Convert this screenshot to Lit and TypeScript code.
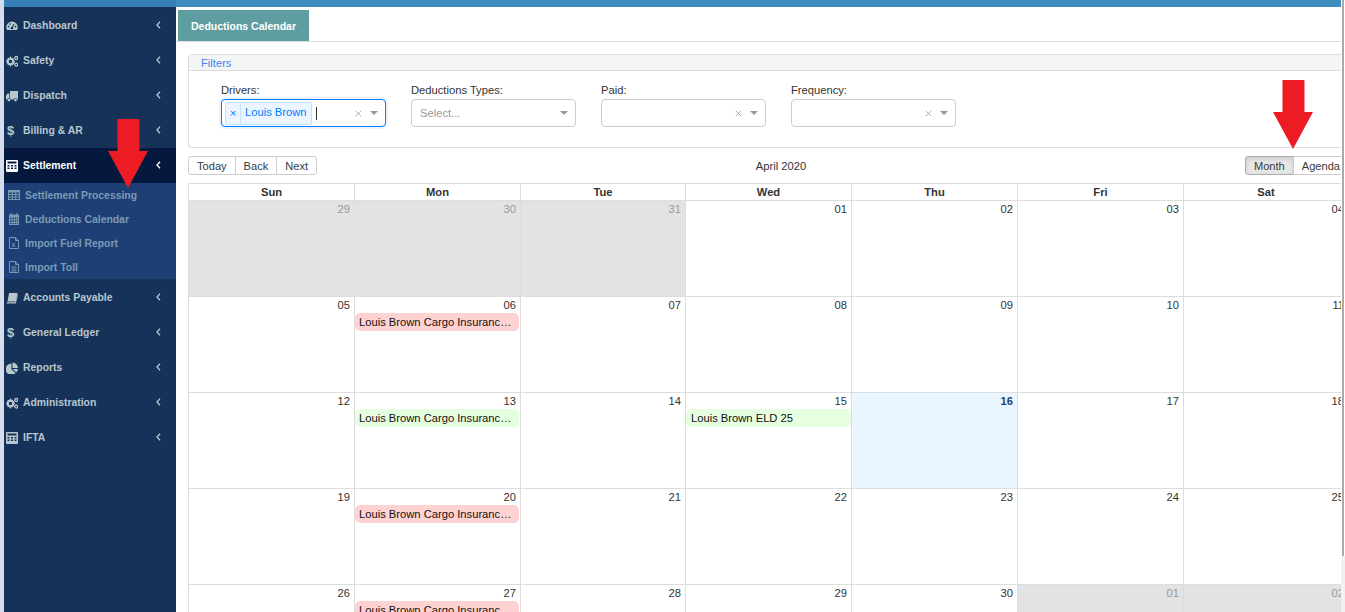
import { LitElement, html, css, svg } from "lit";
import { customElement } from "lit/decorators.js";

const FONT = css`"Liberation Sans", Arial, sans-serif`;

const icons: Record<string, unknown> = {
  dash: svg`<path d="M6 1.500A5.700 5.700 0 0 0 .3 7.200c0 1.100.3 2 .8 2.800h9.800c.5-.8.8-1.700.8-2.800A5.700 5.700 0 0 0 6 1.500z"/><circle cx="6" cy="8" r="1.300" fill="#163259"/><path d="M6 8l2-4" stroke="#163259" stroke-width="1"/><circle cx="2.600" cy="6.600" r=".8" fill="#163259"/><circle cx="4" cy="4" r=".8" fill="#163259"/><circle cx="9.500" cy="6.600" r=".8" fill="#163259"/>`,
  cogs: svg`<circle cx="4.500" cy="6.500" r="2.800" fill="none" stroke="currentColor" stroke-width="2.200"/><path d="M4 1.500h1v2H4zM4 9.500h1v2H4zM0 6h2v1H0zM7 6h2v1H7z"/><circle cx="10.200" cy="3" r="1.500" fill="none" stroke="currentColor" stroke-width="1.300"/><circle cx="10.200" cy="9.600" r="1.500" fill="none" stroke="currentColor" stroke-width="1.300"/>`,
  truck: svg`<path d="M4 1h8v8.500H4zM3.400 3.500H1.500L0 5.500v4h3.400z"/><circle cx="3" cy="10" r="1.700" stroke="#163259" stroke-width=".6"/><circle cx="9.500" cy="10" r="1.700" stroke="#163259" stroke-width=".6"/>`,
  calc: svg`<path fill-rule="evenodd" d="M1 0h10a1 1 0 0 1 1 1v10a1 1 0 0 1-1 1H1a1 1 0 0 1-1-1V1a1 1 0 0 1 1-1zM1.500 1.500v2h9v-2zM1.500 5v1.500h2V5zm3.500 0v1.500h2V5zm3.500 0v1.500h2V5zM1.500 7.500V9h2V7.500zm3.500 0V9h2V7.500zm3.500 0V9h2V7.500z"/>`,
  book: svg`<path d="M3 1h8.500L9.500 9.500H1.500zM1 10.200h8.300l2.200-8 .5.700-2.200 8.600H1.500C.4 11.500.4 10.200 1 10.200z"/>`,
  pie: svg`<path d="M5.400 1.500v5.800l4.200 3.700A5.700 5.700 0 1 1 5.400 1.500z"/><path d="M6.500 0.500A5.700 5.700 0 0 1 12 6H6.500zM6.800 7H12a5.700 5.700 0 0 1-1.700 3.400z"/>`,
  table: svg`<path fill-rule="evenodd" d="M0 1h12v10H0zM1 3.500V5h2.800V3.500zm3.800 0V5h2.400V3.500zm3.400 0V5H11V3.500zM1 6v1.500h2.800V6zm3.800 0v1.500h2.400V6zm3.400 0v1.500H11V6zM1 8.500V10h2.800V8.500zm3.800 0V10h2.400V8.500zm3.400 0V10H11V8.500z"/>`,
  cal: svg`<path fill-rule="evenodd" d="M2.500 0h1.200v1.500h4.600V0h1.200v1.500H11v10.500H1V1.500h1.500zM2 4.500v1.700h1.600V4.500zm2.600 0v1.700h1.300V4.500zm2.300 0v1.700h1.300V4.500zm2.300 0v1.700H10V4.500zM2 7.200v1.700h1.600V7.200zm2.600 0v1.700h1.300V7.200zm2.300 0v1.700h1.300V7.200zm2.300 0v1.700H10V7.200zM2 9.900v1.200h1.600V9.900zm2.600 0v1.200h1.300V9.900zm2.300 0v1.200h1.300V9.900zm2.300 0v1.200H10V9.900z"/>`,
  xls: svg`<path fill="none" stroke="currentColor" d="M1.500.5h6l3 3v8h-9z"/><path fill="none" stroke="currentColor" d="M7.500.5v3h3"/><path fill="none" stroke="currentColor" d="M4 6l3 4M7 6l-3 4"/>`,
  txt: svg`<path fill="none" stroke="currentColor" d="M1.500.5h6l3 3v8h-9z"/><path fill="none" stroke="currentColor" d="M7.500.5v3h3M3.500 6h5M3.500 8h5M3.500 10h5"/>`,
};

function icon(name: string) {
  if (name === "dollar") return html`<span class="dollar">$</span>`;
  return html`<svg class="ico" viewBox="0 0 12 12" fill="currentColor">${icons[name]}</svg>`;
}

const chevron = html`<svg class="chev" viewBox="0 0 5 8"><path d="M4 .8 1 4l3 3.200" fill="none" stroke="currentColor" stroke-width="1.300"/></svg>`;
const clear = html`<svg class="x" viewBox="0 0 9 9"><path d="M1 1l7 7M8 1 1 8" fill="none" stroke="currentColor" stroke-width="1"/></svg>`;

type Ev = { text: string; cls: string };
type Cell = { n: string; off?: boolean; today?: boolean; ev?: Ev };

const cargo = "Louis Brown Cargo Insurance 50";
const weeks: Cell[][] = [
  [{ n: "29", off: true }, { n: "30", off: true }, { n: "31", off: true }, { n: "01" }, { n: "02" }, { n: "03" }, { n: "04" }],
  [{ n: "05" }, { n: "06", ev: { text: cargo, cls: "red" } }, { n: "07" }, { n: "08" }, { n: "09" }, { n: "10" }, { n: "11" }],
  [{ n: "12" }, { n: "13", ev: { text: cargo, cls: "green" } }, { n: "14" }, { n: "15", ev: { text: "Louis Brown ELD 25", cls: "green wide" } }, { n: "16", today: true }, { n: "17" }, { n: "18" }],
  [{ n: "19" }, { n: "20", ev: { text: cargo, cls: "red" } }, { n: "21" }, { n: "22" }, { n: "23" }, { n: "24" }, { n: "25" }],
  [{ n: "26" }, { n: "27", ev: { text: cargo, cls: "red" } }, { n: "28" }, { n: "29" }, { n: "30" }, { n: "01", off: true }, { n: "02", off: true }],
];

const menuTop = [
  ["dash", "Dashboard"],
  ["cogs", "Safety"],
  ["truck", "Dispatch"],
  ["dollar", "Billing & AR"],
];
const menuBottom = [
  ["book", "Accounts Payable"],
  ["dollar", "General Ledger"],
  ["pie", "Reports"],
  ["cogs", "Administration"],
  ["calc", "IFTA"],
];
const sub = [
  ["table", "Settlement Processing"],
  ["cal", "Deductions Calendar"],
  ["xls", "Import Fuel Report"],
  ["txt", "Import Toll"],
];

@customElement("app-root")
export class AppRoot extends LitElement {
  static styles = css`
    :host {
      display: block;
      width: 1345px;
      height: 612px;
      overflow: hidden;
      position: relative;
      background: #fff;
      font-family: ${FONT};
      font-size: 11.2px;
      color: #333;
    }
    .layout { display: flex; height: 612px; }
    .strip { width: 4px; flex: none; background: #d6deee; }
    .side { width: 172px; flex: none; background: #163259; display: flex; flex-direction: column; }
    .side-top { height: 7px; flex: none; background: #3580b4; }
    .item {
      height: 35px; flex: none; display: flex; align-items: center;
      padding: 2px 0 0 2px; color: #b8c7ce; font-weight: 700; font-size: 10.4px;
      box-sizing: border-box;
    }
    .item.active { background: #04193d; color: #fff; margin-top: 1px; padding-top: 0; }
    .ico { width: 12px; height: 12px; flex: none; }
    .dollar { width: 12px; flex: none; font-size: 13px; text-align: left; padding-left: 1px; box-sizing: border-box; }
    .label { margin-left: 5px; flex: 1; }
    .chev { width: 5px; height: 8px; flex: none; margin: 0 15px 2px 0; }
    .sub { background: #1d3f76; height: 96px; flex: none; }
    .subitem {
      height: 24px; display: flex; align-items: center; padding-left: 4px;
      color: #7b9bb4; font-weight: 700; font-size: 10.4px;
    }
    .subitem .label { margin-left: 5px; }
    .main { flex: 1; min-width: 0; display: flex; flex-direction: column; }
    .bar { height: 7px; flex: none; background: #3c8dbc; width: 1165px; }
    .tabs { height: 31px; flex: none; border-bottom: 1px solid #ddd; padding-left: 2px; margin-top: 3px; width: 1163px; }
    .tab {
      display: inline-flex; align-items: center; height: 31px; padding: 0 13px;
      background: #5f9ea0; color: #fff; font-weight: 700; font-size: 10.5px;
    }
    .content { width: 1161px; margin-left: 12px; flex: 1; min-height: 0; }
    .panel { margin-top: 12px; border: 1px solid #ddd; border-right: none; border-radius: 4px 0 0 4px; height: 92px; }
    .panel-h { height: 15px; background: #f5f5f5; border-bottom: 1px solid #ddd; color: #3b82f6; padding-left: 12px; line-height: 16px; }
    .filters { display: flex; gap: 25px; padding: 12px 0 0 32px; }
    .field { width: 165px; }
    .field label { display: block; line-height: 14px; margin-bottom: 2px; color: #333; }
    .sel {
      height: 28px; box-sizing: border-box; border: 1px solid #ccc; border-radius: 4px;
      display: flex; align-items: center; background: #fff; color: #999;
      padding: 0 7px 0 8px;
    }
    .sel.focus { border-color: #007eff; box-shadow: 0 0 0 2px #eaf4ff; padding-left: 3px; }
    .chip { display: flex; height: 23px; box-sizing: border-box; border: 1px solid #c2e0ff; background: #ebf5ff; border-radius: 2px; color: #007eff; align-items: center; }
    .chip .cx { width: 14px; text-align: center; border-right: 1px solid #c2e0ff; line-height: 21px; }
    .chip .ct { padding: 0 4px 2px; }
    .caret { width: 1px; height: 13px; background: #333; margin-left: 4px; }
    .sp { flex: 1; }
    .x { width: 7px; height: 7px; color: #999; margin-right: 8px; }
    .arrow { width: 0; height: 0; border: 4px solid transparent; border-top: 4px solid #999; border-bottom: none; }
    .toolbar { display: flex; align-items: center; justify-content: space-between; height: 19px; margin-top: 8px; }
    .btns { display: flex; flex: none; }
    .btn {
      box-sizing: border-box; height: 19px; border: 1px solid #ccc; margin-left: -1px; padding: 0 8px;
      font-size: 11.1px; line-height: 19px; color: #373a3c; background: #fff; white-space: nowrap;
    }
    .btn:first-child { margin-left: 0; border-radius: 3px 0 0 3px; }
    .btn:last-child { border-radius: 0 3px 3px 0; }
    .btn.on { background: #e6e6e6; border-color: #adadad; box-shadow: inset 0 2px 4px rgba(0,0,0,.12); border-radius: 3px 0 0 3px; }
    .title { flex: 1; text-align: center; color: #333; line-height: 19px; padding-top: 2px; }
    .cal { margin-top: 8px; border-left: 1px solid #ddd; border-top: 1px solid #ddd; width: 1161px; }
    .row { display: grid; grid-template-columns: 166px 166px 165px 166px 166px 166px 165px; }
    .head { height: 16px; border-bottom: 1px solid #ddd; }
    .head div { text-align: center; font-weight: 700; line-height: 16px; border-right: 1px solid #ddd; color: #333; }
    .week { height: 96px; box-sizing: border-box; border-bottom: 1px solid #ddd; }
    .cell { border-right: 1px solid #ddd; box-sizing: border-box; min-width: 0; height: 95px; }
    .cell.off { background: #e3e3e3; }
    .cell.today { background: #eaf6ff; }
    .num { text-align: right; line-height: 13px; padding: 2px 4px 0 0; color: #333; height: 14px; }
    .off .num { color: #999; }
    .today .num { font-weight: 700; color: #1d3f76; }
    .ev {
      height: 18px; margin: 0 1px 0 0; padding: 0 5px 0 4px; border-radius: 5px; line-height: 18px;
      color: #111; white-space: nowrap; overflow: hidden; text-overflow: ellipsis;
    }
    .ev.wide { margin-right: 0; padding-left: 5px; }
    .ev.red { background: #ffd2d2; }
    .ev.green { background: #e6ffe0; }
    .scroll { position: absolute; right: 0; top: 0; width: 4px; height: 612px; background: #fff; }
    .scroll i { display: block; position: absolute; left: 1px; top: 0; width: 2px; height: 556px; background: #a9a9a9; }
    .scroll b { display: block; position: absolute; left: 0; top: 556px; width: 4px; height: 56px; background: #f1f1f1; }
    .red-arrow { position: absolute; width: 40px; height: 70px; }
  `;

  private arrow(x: number, y: number) {
    return html`<svg class="red-arrow" style="left:${x}px;top:${y}px" viewBox="0 0 40 70"><path d="M9.500 0h21a1 1 0 0 1 1 1v31h8.500L20 69 0 32h9.500V1z" fill="#ed1c24"/></svg>`;
  }

  render() {
    return html`
      <div class="layout">
        <div class="strip"></div>
        <nav class="side">
          <div class="side-top"></div>
          ${menuTop.map(([i, t]) => html`<div class="item">${icon(i)}<span class="label">${t}</span>${chevron}</div>`)}
          <div class="item active">${icon("calc")}<span class="label">Settlement</span>${chevron}</div>
          <div class="sub">
            ${sub.map(([i, t]) => html`<div class="subitem">${icon(i)}<span class="label">${t}</span></div>`)}
          </div>
          ${menuBottom.map(([i, t]) => html`<div class="item">${icon(i)}<span class="label">${t}</span>${chevron}</div>`)}
        </nav>
        <main class="main">
          <div class="bar"></div>
          <div class="tabs"><span class="tab">Deductions Calendar</span></div>
          <div class="content">
            <section class="panel">
              <div class="panel-h">Filters</div>
              <div class="filters">
                <div class="field">
                  <label>Drivers:</label>
                  <div class="sel focus">
                    <span class="chip"><span class="cx">×</span><span class="ct">Louis Brown</span></span>
                    <span class="caret"></span><span class="sp"></span>${clear}<span class="arrow"></span>
                  </div>
                </div>
                <div class="field">
                  <label>Deductions Types:</label>
                  <div class="sel"><span>Select...</span><span class="sp"></span><span class="arrow"></span></div>
                </div>
                <div class="field">
                  <label>Paid:</label>
                  <div class="sel"><span class="sp"></span>${clear}<span class="arrow"></span></div>
                </div>
                <div class="field">
                  <label>Frequency:</label>
                  <div class="sel"><span class="sp"></span>${clear}<span class="arrow"></span></div>
                </div>
              </div>
            </section>
            <div class="toolbar">
              <div class="btns"><span class="btn">Today</span><span class="btn">Back</span><span class="btn">Next</span></div>
              <span class="title">April 2020</span>
              <div class="btns"><span class="btn on">Month</span><span class="btn">Agenda</span></div>
            </div>
            <div class="cal">
              <div class="row head">
                ${["Sun", "Mon", "Tue", "Wed", "Thu", "Fri", "Sat"].map((d) => html`<div>${d}</div>`)}
              </div>
              ${weeks.map(
                (w) => html`<div class="row week">
                  ${w.map(
                    (c) => html`<div class="cell ${c.off ? "off" : ""} ${c.today ? "today" : ""}">
                      <div class="num">${c.n}</div>
                      ${c.ev ? html`<div class="ev ${c.ev.cls}">${c.ev.text}</div>` : ""}
                    </div>`
                  )}
                </div>`
              )}
            </div>
          </div>
        </main>
      </div>
      <div class="scroll"><i></i><b></b></div>
      ${this.arrow(108, 119)} ${this.arrow(1273, 80)}
    `;
  }
}
